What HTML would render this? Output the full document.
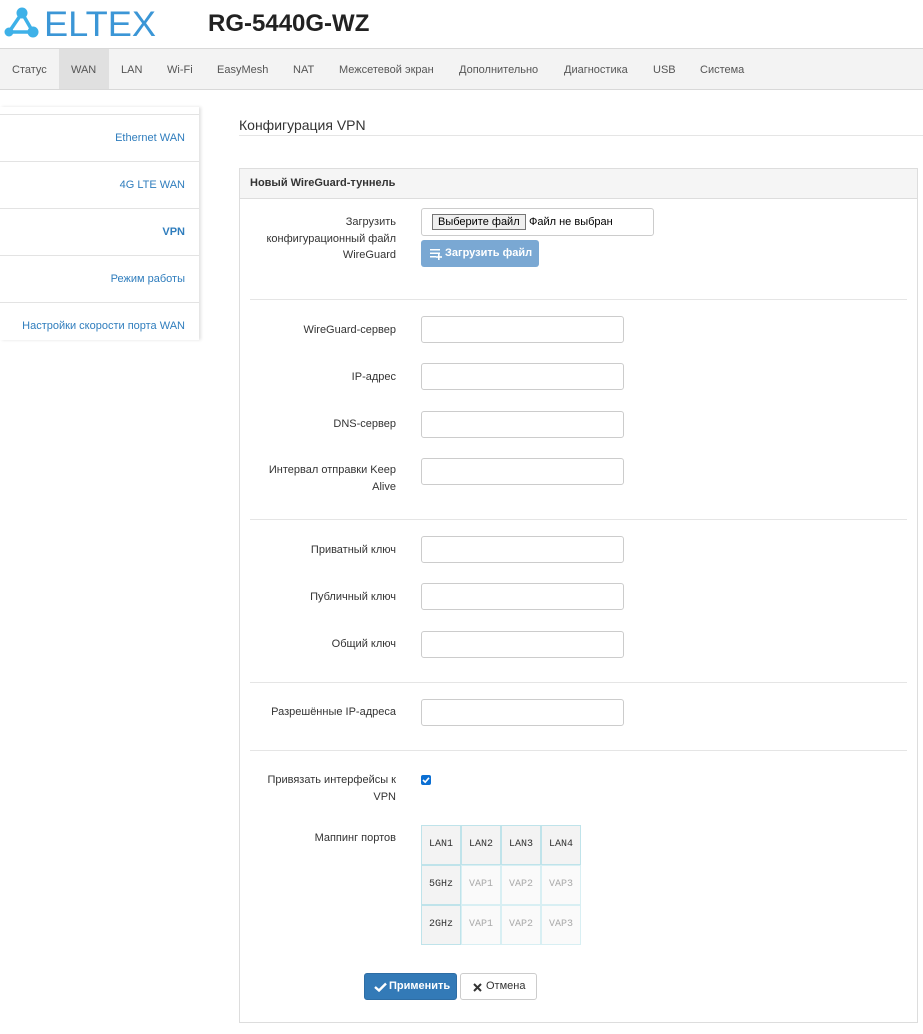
<!DOCTYPE html>
<html><head><meta charset="utf-8"><style>
*{box-sizing:border-box;margin:0;padding:0}
body{width:923px;height:1034px;background:#fff;font-family:"Liberation Sans",Arial,sans-serif;color:#333;position:relative;overflow:hidden;font-size:11px}
.abs{position:absolute}
.nav{left:0;top:48px;width:923px;height:42px;background:#f3f3f3;border-top:1px solid #d8d8d8;border-bottom:1px solid #d8d8d8}
.nav span{position:absolute;top:15px;font-size:11px;color:#555}
.side{left:0;top:107px;width:199px;height:233px;box-shadow:2px 0 3px rgba(0,0,0,.12);background:#fff}
.si{position:absolute;left:0;width:199px;height:47px;border-top:1px solid #e3e3e3;text-align:right;padding-right:14px;line-height:46px;color:#2f7dbd;font-size:11px}
.lbl{position:absolute;left:250px;text-align:right;font-size:11px;color:#333;line-height:16.5px;width:146px}
.inp{position:absolute;left:421px;width:203px;height:27px;border:1px solid #ccc;border-radius:3px;background:#fff}
.sep{position:absolute;left:250px;width:657px;height:1px;background:#e5e5e5}
.cell{position:absolute;width:40px;height:40px;border:1px solid #bfe3ea;font-family:"Liberation Mono",monospace;font-size:10px;text-align:center;line-height:38px}
</style></head><body>
<svg class="abs" style="left:0;top:0" width="170" height="46">
<g stroke="#3eb1e8" stroke-width="3.5" fill="none"><line x1="22" y1="13" x2="9" y2="32"/><line x1="22" y1="13" x2="33" y2="32"/><line x1="9" y1="32" x2="33" y2="32"/></g>
<g fill="#3eb1e8"><circle cx="22" cy="13" r="5.5"/><circle cx="9" cy="32" r="4.5"/><circle cx="33" cy="32" r="5.5"/></g>
<text x="44" y="36" font-family="Liberation Sans" font-size="35" fill="#3b96d6" textLength="112" lengthAdjust="spacingAndGlyphs">ELTEX</text>
</svg>
<div class="abs" style="left:208px;top:10px;font-size:24px;font-weight:bold;color:#222">RG-5440G-WZ</div>
<div class="abs nav">
<div class="abs" style="left:59px;top:0;width:50px;height:40px;background:#e0e0e0"></div>
<span style="left:12px">Статус</span><span style="left:71px">WAN</span><span style="left:121px">LAN</span><span style="left:167px">Wi-Fi</span><span style="left:217px">EasyMesh</span><span style="left:293px">NAT</span><span style="left:339px">Межсетевой экран</span><span style="left:459px">Дополнительно</span><span style="left:564px">Диагностика</span><span style="left:653px">USB</span><span style="left:700px">Система</span>
</div>
<div class="abs side">
<div class="si" style="top:7px">Ethernet WAN</div>
<div class="si" style="top:54px">4G LTE WAN</div>
<div class="si" style="top:101px;font-weight:bold">VPN</div>
<div class="si" style="top:148px">Режим работы</div>
<div class="si" style="top:195px">Настройки скорости порта WAN</div>
</div>
<div class="abs" style="left:239px;top:117px;font-size:14px;color:#333">Конфигурация VPN</div>
<div class="abs" style="left:239px;top:135px;width:684px;height:1px;background:#e5e5e5"></div>
<div class="abs" style="left:239px;top:168px;width:679px;height:855px;border:1px solid #ddd"></div>
<div class="abs" style="left:240px;top:169px;width:677px;height:30px;background:#f5f5f5;border-bottom:1px solid #ddd;font-weight:bold;font-size:11px;line-height:29px;padding-left:10px">Новый WireGuard-туннель</div>

<div class="lbl" style="top:214px">Загрузить конфигурационный файл WireGuard</div>
<div class="abs" style="left:421px;top:208px;width:233px;height:28px;border:1px solid #ccc;border-radius:3px;font-size:11px"><span style="position:absolute;left:10px;top:5px;border:1px solid #767676;background:#efefef;padding:1px 5px;color:#000">Выберите файл</span><span style="position:absolute;left:107px;top:7px;color:#000">Файл не выбран</span></div>
<div class="abs" style="left:421px;top:240px;width:118px;height:27px;background:#7aa8d3;border-radius:3px;color:#fff;font-weight:bold;font-size:11px;line-height:27px;padding-left:24px">Загрузить файл
<svg style="position:absolute;left:9px;top:8px" width="12" height="12"><g fill="#fff"><rect x="0" y="1" width="10" height="1.5"/><rect x="0" y="4.5" width="10" height="1.5"/><rect x="0" y="8" width="6" height="1.5"/><rect x="8" y="6" width="1.6" height="6"/><rect x="6" y="8.2" width="6" height="1.6"/></g></svg></div>
<div class="sep" style="top:299px"></div>
<div class="lbl" style="top:322px">WireGuard-сервер</div><div class="inp" style="top:316px"></div>
<div class="lbl" style="top:369px">IP-адрес</div><div class="inp" style="top:363px"></div>
<div class="lbl" style="top:416px">DNS-сервер</div><div class="inp" style="top:411px"></div>
<div class="lbl" style="top:462px">Интервал отправки Keep Alive</div><div class="inp" style="top:458px"></div>
<div class="sep" style="top:519px"></div>
<div class="lbl" style="top:542px">Приватный ключ</div><div class="inp" style="top:536px"></div>
<div class="lbl" style="top:589px">Публичный ключ</div><div class="inp" style="top:583px"></div>
<div class="lbl" style="top:636px">Общий ключ</div><div class="inp" style="top:631px"></div>
<div class="sep" style="top:682px"></div>
<div class="lbl" style="top:704px">Разрешённые IP-адреса</div><div class="inp" style="top:699px"></div>
<div class="sep" style="top:750px"></div>
<div class="lbl" style="top:772px">Привязать интерфейсы к VPN</div>
<div class="abs" style="left:421px;top:775px;width:10px;height:10px;background:#0b6fd3;border-radius:2px"><svg width="10" height="10" style="position:absolute;left:0;top:0"><path d="M2 5 L4.2 7.2 L8 2.8" stroke="#fff" stroke-width="1.6" fill="none"/></svg></div>
<div class="lbl" style="top:830px">Маппинг портов</div>
<div class="cell" style="left:421px;top:825px;background:#f3f3f3;color:#333">LAN1</div>
<div class="cell" style="left:461px;top:825px;background:#f3f3f3;color:#333">LAN2</div>
<div class="cell" style="left:501px;top:825px;background:#f3f3f3;color:#333">LAN3</div>
<div class="cell" style="left:541px;top:825px;background:#f3f3f3;color:#333">LAN4</div>
<div class="cell" style="left:421px;top:865px;background:#f3f3f3;color:#333">5GHz</div>
<div class="cell" style="left:461px;top:865px;background:#fafafa;color:#aaa;border-color:#d8eff3">VAP1</div>
<div class="cell" style="left:501px;top:865px;background:#fafafa;color:#aaa;border-color:#d8eff3">VAP2</div>
<div class="cell" style="left:541px;top:865px;background:#fafafa;color:#aaa;border-color:#d8eff3">VAP3</div>
<div class="cell" style="left:421px;top:905px;background:#f3f3f3;color:#333">2GHz</div>
<div class="cell" style="left:461px;top:905px;background:#fafafa;color:#aaa;border-color:#d8eff3">VAP1</div>
<div class="cell" style="left:501px;top:905px;background:#fafafa;color:#aaa;border-color:#d8eff3">VAP2</div>
<div class="cell" style="left:541px;top:905px;background:#fafafa;color:#aaa;border-color:#d8eff3">VAP3</div>
<div class="abs" style="left:364px;top:973px;width:93px;height:27px;background:#337ab7;border:1px solid #2e6da4;border-radius:3px;color:#fff;font-weight:bold;font-size:11px;line-height:25px;padding-left:24px">Применить
<svg style="position:absolute;left:9px;top:8px" width="13" height="10"><path d="M1 5 L5 8.5 L12 1.5" stroke="#fff" stroke-width="2.4" fill="none"/></svg></div>
<div class="abs" style="left:460px;top:973px;width:77px;height:27px;background:#fff;border:1px solid #ccc;border-radius:3px;color:#333;font-size:11px;line-height:25px;padding-left:25px">Отмена
<svg style="position:absolute;left:12px;top:9px" width="9" height="9"><path d="M1 1 L8 8 M8 1 L1 8" stroke="#333" stroke-width="2"/></svg></div>
</body></html>
